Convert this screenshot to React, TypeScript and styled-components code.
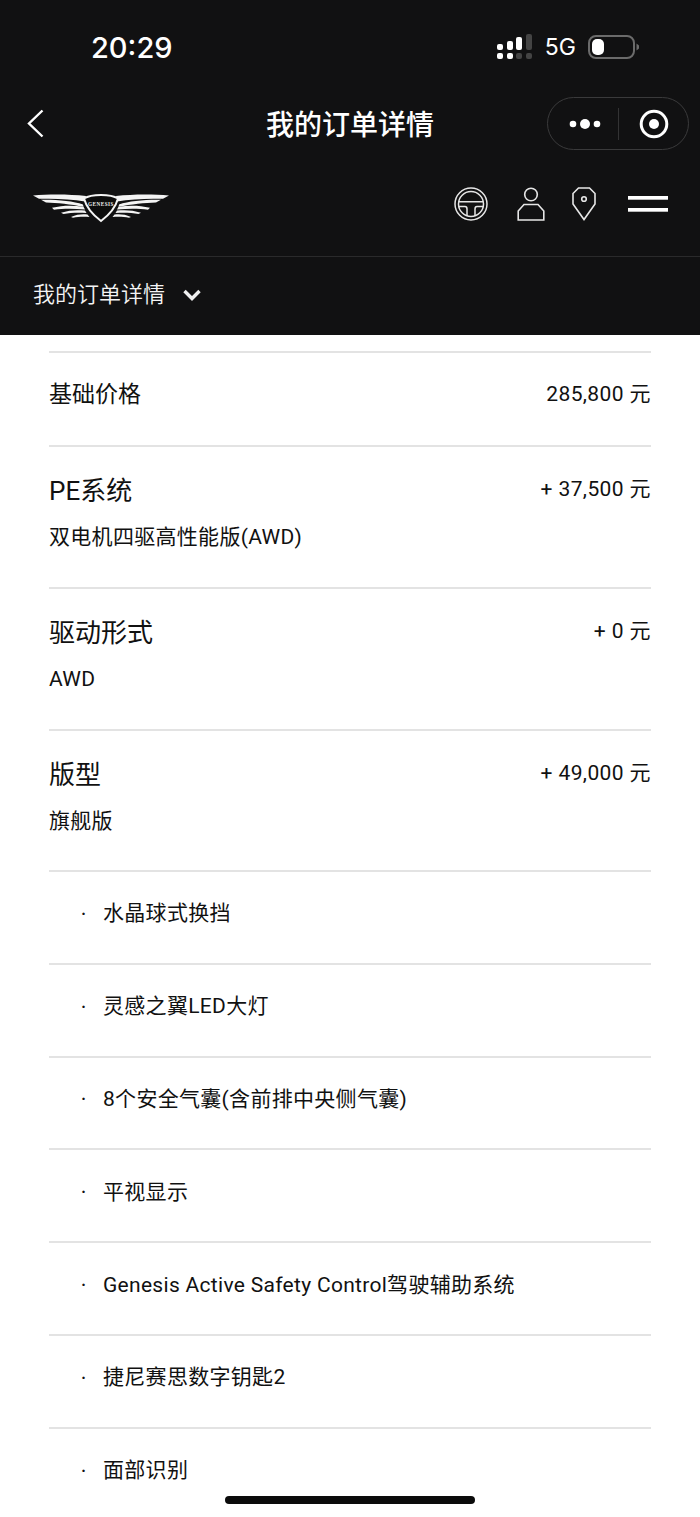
import styled, { createGlobalStyle } from "styled-components";

const GlobalStyle = createGlobalStyle`
  html, body {
    margin: 0;
    padding: 0;
    background: #fff;
  }
  body {
    font-family: "Inter", "Noto Sans CJK SC", sans-serif;
  }
`;

const Page = styled.div`
  position: relative;
  width: 700px;
  height: 1517px;
  overflow: hidden;
  background: #fff;
`;

const Header = styled.header`
  background: #111112;
  color: #fff;
`;

const StatusBar = styled.div`
  height: 97px;
  box-sizing: border-box;
  padding: 29px 0 0 91px;
  display: flex;
  justify-content: space-between;
`;

const Time = styled.div`
  font-size: 29px;
  line-height: 36px;
  font-weight: 500;
  margin-top: 1px;
`;

const StatusIcons = styled.div`
  display: flex;
  align-items: center;
  height: 36px;
  margin-right: 60px;
  gap: 12px;
`;

const Network = styled.span`
  font-size: 23px;
  line-height: 36px;
  font-weight: 400;
`;

const NavBar = styled.div`
  position: relative;
  height: 54px;
  display: flex;
  align-items: center;
  justify-content: center;
`;

const BackButton = styled.div`
  position: absolute;
  left: 26px;
  top: 11px;
  display: flex;
`;

const NavTitle = styled.h1`
  margin: 2px 0 0;
  font-size: 28px;
  font-weight: 500;
  line-height: 50px;
`;

const Capsule = styled.div`
  position: absolute;
  right: 11px;
  top: 0;
  width: 142px;
  height: 53px;
  box-sizing: border-box;
  border: 1px solid #3a3a3b;
  border-radius: 27px;
  display: flex;
  align-items: center;
`;

const MoreCell = styled.div`
  flex: 0 0 70px;
  box-sizing: border-box;
  padding-left: 3px;
  display: flex;
  align-items: center;
  justify-content: center;
`;

const RecordCell = styled.div`
  flex: 1;
  display: flex;
  align-items: center;
  justify-content: center;
`;

const CapsuleDivider = styled.div`
  width: 1px;
  height: 32px;
  background: #333334;
`;

const BrandBar = styled.div`
  height: 106px;
  box-sizing: border-box;
  padding: 0 32px 0 33px;
  display: flex;
  align-items: center;
  justify-content: space-between;
  border-bottom: 1px solid #2a2a2b;
`;

const BrandIcons = styled.div`
  display: flex;
  align-items: center;
  gap: 27px;
`;

const MenuButton = styled.div`
  display: flex;
  margin-left: 5px;
`;

const SubBar = styled.div`
  height: 78px;
  box-sizing: border-box;
  padding: 0 0 9px 33px;
  display: flex;
  align-items: center;
  gap: 17px;
  font-size: 22px;
  font-weight: 350;
  color: #f4f4f4;
`;

const SubChevron = styled.div`
  display: flex;
  margin-top: 6px;
`;

const List = styled.main`
  padding: 16px 49px 0;
  font-family: "Roboto", "Noto Sans CJK SC", sans-serif;
  font-weight: 380;
`;

const Row = styled.section<{ $height: number }>`
  height: ${(p) => p.$height}px;
  box-sizing: border-box;
  border-top: 2px solid #e3e3e3;
  color: #111;
`;

const PriceRow = styled(Row)`
  display: flex;
  justify-content: space-between;
  align-items: flex-start;
`;

const BaseLabel = styled.div`
  font-size: 23px;
  line-height: 30px;
  margin-top: 27px;
`;

const Title = styled.div`
  font-size: 26px;
  line-height: 34px;
  margin-top: 27px;
`;

const Subtitle = styled.div`
  font-size: 21px;
  line-height: 28px;
  margin-top: 15px;
  letter-spacing: 0.3px;
`;

const Price = styled.div<{ $top: number }>`
  font-size: 21px;
  line-height: 28px;
  margin-top: ${(p) => p.$top}px;
  letter-spacing: 0.4px;
`;

const OptionRow = styled(Row)`
  display: flex;
  align-items: center;
  padding: 0 0 12px 32px;
  font-size: 21px;
`;

const Dot = styled.span`
  width: 22px;
  flex: none;
  margin-top: 4px;
  font-size: 18px;
  font-weight: 500;
`;

const OptionText = styled.span`
  letter-spacing: 0.3px;
`;

const HomeIndicator = styled.div`
  position: absolute;
  left: 225px;
  bottom: 13px;
  width: 250px;
  height: 8px;
  border-radius: 4px;
  background: #0b0b0b;
`;

const SignalIcon = () => (
  <svg width="36" height="26" viewBox="0 0 36 26" fill="#fff">
    <rect x="0" y="10" width="6" height="6" rx="2" />
    <rect x="0" y="19" width="6" height="6" rx="2" />
    <rect x="10" y="7" width="6" height="9" rx="2" />
    <rect x="10" y="19" width="6" height="6" rx="2" />
    <rect x="19" y="3" width="6" height="13" rx="2" />
    <rect x="19" y="19" width="6" height="6" rx="2" fill="#444" />
    <rect x="29" y="0" width="6" height="16" rx="2" fill="#444" />
    <rect x="29" y="19" width="6" height="6" rx="2" fill="#444" />
  </svg>
);

const BatteryIcon = () => (
  <svg width="52" height="24" viewBox="0 0 52 24">
    <rect x="1" y="1" width="45" height="22" rx="7" fill="none" stroke="#6b6b6b" strokeWidth="2" />
    <rect x="4" y="4" width="12" height="16" rx="5" fill="#fff" />
    <path d="M48.500 8.500 L51 10.500 V13.500 L48.500 15.500 Z" fill="#6b6b6b" />
  </svg>
);

const BackIcon = () => (
  <svg width="20" height="32" viewBox="0 0 20 32" fill="none" stroke="#fff" strokeWidth="2.400">
    <path d="M16.500 2.500 L3 15.500 L16.500 28.500" />
  </svg>
);

const MoreIcon = () => (
  <svg width="32" height="12" viewBox="0 0 32 12" fill="#fff">
    <circle cx="4" cy="6" r="3.300" />
    <circle cx="16" cy="6" r="5" />
    <circle cx="28" cy="6" r="3.300" />
  </svg>
);

const RecordIcon = () => (
  <svg width="30" height="30" viewBox="0 0 30 30">
    <circle cx="15" cy="15" r="12.800" fill="none" stroke="#fff" strokeWidth="3" />
    <circle cx="15" cy="15" r="5" fill="#fff" />
  </svg>
);

const Wing = () => (
  <g fill="#f4f4f4">
    <path d="M0 3.500 C16 2 36 2 53 4 L52 9.500 C38 6.800 20 6.300 6 6.800 Z" />
    <path d="M8 7.800 C24 7.500 40 9 50 12.500 L50.500 14.800 C38 12 24 10.800 13 10.400 Z" />
    <path d="M19 15.800 C30 13.200 40 13.200 50.500 14.800 L52 17.500 C40 16.500 30 16.500 21 17.800 Z" />
    <path d="M28 20.800 C36 18 44 17.800 52 18.500 L53.500 21 C45 20.500 37 20.800 30.500 22 Z" />
    <path d="M38 25 C44 22.300 49 22 54.500 22.500 L56.500 25 C50 24.500 45 24.800 40 25.800 Z" />
  </g>
);

const GenesisLogo = () => (
  <svg width="136" height="40" viewBox="0 -8 136 40">
    <Wing />
    <g transform="translate(136 0) scale(-1 1)">
      <Wing />
    </g>
    <path
      d="M68 3 C60 3 55 4 51 6.500 C53 14 60 23 68 29 C76 23 83 14 85 6.500 C81 4 76 3 68 3 Z"
      fill="#0c0c0c"
      stroke="#f4f4f4"
      strokeWidth="2"
    />
    <text
      x="68"
      y="14"
      textAnchor="middle"
      fontSize="5.200"
      fontWeight="700"
      letterSpacing="0.5"
      fill="#eeeeee"
      fontFamily="'Liberation Serif', serif"
    >
      GENESIS
    </text>
  </svg>
);

const WheelIcon = () => (
  <svg width="36" height="34" viewBox="0 0 36 34" fill="none" stroke="#e6e6e6" strokeWidth="1.500">
    <circle cx="17" cy="17" r="16" />
    <circle cx="17" cy="17" r="12.500" />
    <path d="M4.800 14.700 H29.200 M4.700 19.500 H11 C12.500 19.500 13 20.500 13 22 V29 M29.300 19.500 H23 C21.500 19.500 21 20.500 21 22 V29" />
  </svg>
);

const PersonIcon = () => (
  <svg width="28" height="34" viewBox="0 0 28 34" fill="none" stroke="#e6e6e6" strokeWidth="1.600">
    <circle cx="14" cy="7.500" r="6.300" />
    <path d="M1.200 33 V24 L7 17.500 H21 L26.800 24 V33 Z" />
  </svg>
);

const PinIcon = () => (
  <svg width="24" height="34" viewBox="0 0 24 34" fill="none" stroke="#e6e6e6" strokeWidth="1.600">
    <path d="M6.500 1 H17.500 L23 6.500 V17 L12 32.500 L1 17 V6.500 Z" />
    <circle cx="12" cy="12" r="2.300" />
  </svg>
);

const MenuIcon = () => (
  <svg width="40" height="16" viewBox="0 0 40 16" fill="#fff">
    <rect x="0" y="0" width="40" height="3.700" />
    <rect x="0" y="12" width="40" height="3.700" />
  </svg>
);

const ChevronIcon = () => (
  <svg width="20" height="14" viewBox="0 0 20 14" fill="none" stroke="#f0f0f0" strokeWidth="3.400">
    <path d="M2.500 3 L10 10.500 L17.500 3" />
  </svg>
);

const options = [
  "水晶球式换挡",
  "灵感之翼LED大灯",
  "8个安全气囊(含前排中央侧气囊)",
  "平视显示",
  "Genesis Active Safety Control驾驶辅助系统",
  "捷尼赛思数字钥匙2",
  "面部识别",
];

const configs = [
  { title: "PE系统", detail: "双电机四驱高性能版(AWD)", price: "+ 37,500 元", height: 142 },
  { title: "驱动形式", detail: "AWD", price: "+ 0 元", height: 142 },
  { title: "版型", detail: "旗舰版", price: "+ 49,000 元", height: 141 },
];

export default function App() {
  return (
    <Page>
      <GlobalStyle />
      <Header>
        <StatusBar>
          <Time>20:29</Time>
          <StatusIcons>
            <SignalIcon />
            <Network>5G</Network>
            <BatteryIcon />
          </StatusIcons>
        </StatusBar>
        <NavBar>
          <BackButton>
            <BackIcon />
          </BackButton>
          <NavTitle>我的订单详情</NavTitle>
          <Capsule>
            <MoreCell>
              <MoreIcon />
            </MoreCell>
            <CapsuleDivider />
            <RecordCell>
              <RecordIcon />
            </RecordCell>
          </Capsule>
        </NavBar>
        <BrandBar>
          <GenesisLogo />
          <BrandIcons>
            <WheelIcon />
            <PersonIcon />
            <PinIcon />
            <MenuButton>
              <MenuIcon />
            </MenuButton>
          </BrandIcons>
        </BrandBar>
        <SubBar>
          我的订单详情
          <SubChevron>
            <ChevronIcon />
          </SubChevron>
        </SubBar>
      </Header>
      <List>
        <PriceRow $height={94}>
          <BaseLabel>基础价格</BaseLabel>
          <Price $top={27}>285,800 元</Price>
        </PriceRow>
        {configs.map((c) => (
          <PriceRow key={c.title} $height={c.height}>
            <div>
              <Title>{c.title}</Title>
              <Subtitle>{c.detail}</Subtitle>
            </div>
            <Price $top={28}>{c.price}</Price>
          </PriceRow>
        ))}
        {options.map((o) => (
          <OptionRow key={o} $height={92.8}>
            <Dot>·</Dot>
            <OptionText>{o}</OptionText>
          </OptionRow>
        ))}
      </List>
      <HomeIndicator />
    </Page>
  );
}
